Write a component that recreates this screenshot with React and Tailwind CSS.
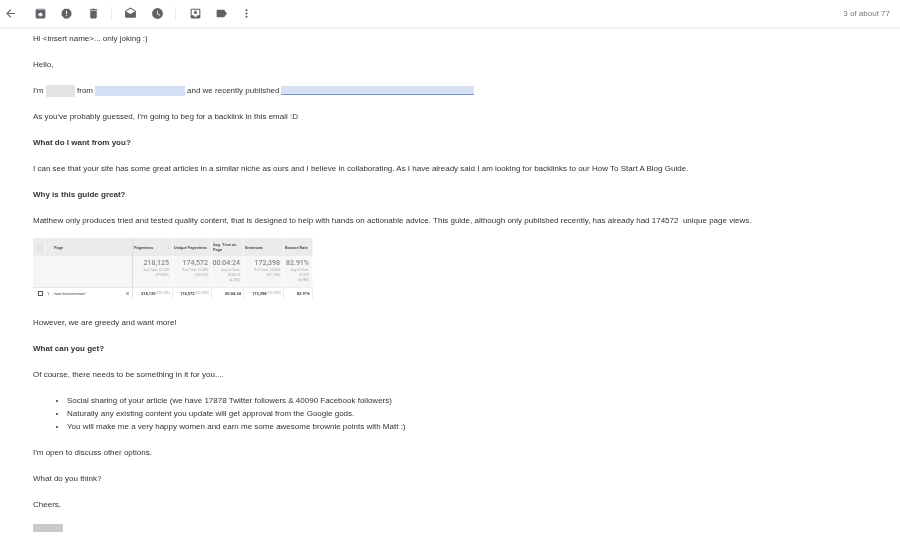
const icons = [
  { name: "back", cls: "ml-[4px] w-[13px] h-[13px]", d: "M20 11H7.83l5.59-5.59L12 4l-8 8 8 8 1.41-1.41L7.83 13H20v-2z" },
  { name: "archive", cls: "ml-[17px] w-[13px] h-[13px]", d: "M20.54 5.23l-1.39-1.68C18.88 3.21 18.47 3 18 3H6c-.47 0-.88.21-1.16.55L3.46 5.23C3.17 5.57 3 6.02 3 6.5V19c0 1.1.9 2 2 2h14c1.1 0 2-.9 2-2V6.5c0-.48-.17-.93-.46-1.27zM12 9.5L17.5 15H14v2h-4v-2H6.5L12 9.5zM5.12 5l.81-1h12l.94 1H5.12z" },
  { name: "report", cls: "ml-[13px] w-[13px] h-[13px]", d: "M15.73 3H8.27L3 8.27v7.46L8.27 21h7.46L21 15.73V8.27L15.73 3zM12 17.3c-.72 0-1.3-.58-1.3-1.3 0-.72.58-1.3 1.3-1.3.72 0 1.3.58 1.3 1.3 0 .72-.58 1.3-1.3 1.3zm1-4.3h-2V7h2v6z" },
  { name: "delete", cls: "ml-[14px] w-[13px] h-[13px]", d: "M6 19c0 1.1.9 2 2 2h8c1.1 0 2-.9 2-2V7H6v12zM19 4h-3.5l-1-1h-5l-1 1H5v2h14V4z" },
  { name: "divider1" },
  { name: "drafts", cls: "ml-[12px] w-[13px] h-[13px]", d: "M21.99 8c0-.72-.37-1.35-.94-1.7L12 1 2.95 6.3C2.38 6.65 2 7.28 2 8v10c0 1.1.9 2 2 2h16c1.1 0 2-.9 2-2l-.01-10zM12 13L3.74 7.84 12 3l8.26 4.84L12 13z" },
  { name: "schedule", cls: "ml-[14px] w-[13px] h-[13px]", d: "M12 2a10 10 0 100 20 10 10 0 000-20zm4.2 14.2L11 13V7h1.5v5.2l4.5 2.7-.8 1.3z" },
  { name: "divider2" },
  { name: "inbox", cls: "ml-[13px] w-[13px] h-[13px]", d: "M19 3H4.99c-1.11 0-1.98.89-1.98 2L3 19c0 1.1.88 2 1.99 2H19c1.1 0 2-.9 2-2V5c0-1.11-.9-2-2-2zm0 12h-4c0 1.66-1.35 3-3 3s-3-1.34-3-3H4.99V5H19v10zm-3-5h-2V7h-4v3H8l4 4 4-4z" },
  { name: "label", cls: "ml-[13px] w-[13px] h-[13px]", d: "M17.63 5.84C17.27 5.33 16.67 5 16 5L5 5.01C3.9 5.01 3 5.9 3 7v10c0 1.1.9 1.99 2 1.99L16 19c.67 0 1.27-.33 1.63-.84L22 12l-4.37-6.16z" },
  { name: "more", cls: "ml-[12px] w-[13px] h-[13px]", d: "M12 8c1.1 0 2-.9 2-2s-.9-2-2-2-2 .9-2 2 .9 2 2 2zm0 2c-1.1 0-2 .9-2 2s.9 2 2 2 2-.9 2-2-.9-2-2-2zm0 6c-1.1 0-2 .9-2 2s.9 2 2 2 2-.9 2-2-.9-2-2-2z" },
];

const columns = [
  { head: "Pageviews", total: "218,125", sub: ["% of Total: 22.26%", "(976,800)"], row: "218,125", pct: "(100.00%)", sorted: true },
  { head: "Unique Pageviews", total: "174,572", sub: ["% of Total: 22.58%", "(768,133)"], row: "174,572", pct: "(100.00%)" },
  { head: "Avg. Time on Page", total: "00:04:24", sub: ["Avg for View:", "00:04:13", "(4.53%)"], row: "00:04:24", pct: "" },
  { head: "Entrances", total: "172,398", sub: ["% of Total: 25.68%", "(671,298)"], row: "172,398", pct: "(100.00%)" },
  { head: "Bounce Rate", total: "82.91%", sub: ["Avg for View:", "76.35%", "(8.38%)"], row: "82.91%", pct: "" },
];

const Icon = ({ icon }) => {
  if (!icon.d) {
    return <div className="ml-[11px] w-px h-[13px] bg-[#eeeeee]"></div>;
  }
  return (
    <svg viewBox="0 0 24 24" className={`${icon.cls} shrink-0 fill-[#5f6368]`}>
      <path d={icon.d} />
    </svg>
  );
};

const AnalyticsTable = () => (
  <div className="mt-[-2px] mb-[17px] w-[280px] grid grid-cols-[13px_87px_40px_39px_32px_40px_29px] grid-rows-[18px_31px_12px] text-[#777] font-['Roboto',sans-serif]">
    <div className="bg-[#ebebeb] border-r border-[#f5f5f5] flex items-center justify-center">
      <div className="w-[5px] h-[5px] border-[0.5px] border-[#ddd]"></div>
    </div>
    <div className="bg-[#ebebeb] border-r border-[#ddd] flex items-center pl-[8px] text-[4px] font-bold text-[#555]">Page</div>
    {columns.map((c) => (
      <div key={c.head} className="bg-[#ebebeb] border-r border-[#f5f5f5] flex items-center justify-between pl-[1px] pr-[3px] text-[4px] leading-[5px] font-bold text-[#555]">
        <span>{c.head}</span>
        {c.sorted && <span className="font-normal text-[#777]">↓</span>}
      </div>
    ))}
    <div className="col-span-2 bg-[#f6f6f6] border-r border-[#ddd]"></div>
    {columns.map((c) => (
      <div key={c.total} className="bg-[#f6f6f6] border-r border-[#fbfbfb] text-right pr-[3px] pt-[3px]">
        <div className="text-[7px] leading-[9px] font-medium text-[#888]">{c.total}</div>
        {c.sub.map((s) => (
          <div key={s} className="text-[3.2px] leading-[5px] text-[#aaa]">{s}</div>
        ))}
      </div>
    ))}
    <div className="flex items-center justify-center border-t border-[#e5e5e5]">
      <div className="ml-[2px] w-[5px] h-[5px] border-[0.5px] border-[#555]"></div>
    </div>
    <div className="flex items-center justify-between pl-[1px] pr-[3px] border-t border-r border-[#e5e5e5] text-[4px] text-[#444]">
      <span>1.&nbsp;&nbsp;&nbsp;/seo/ecommerce/</span>
      <span className="w-[3px] h-[3px] bg-[#bbb]"></span>
    </div>
    {columns.map((c) => (
      <div key={c.row} className="flex items-center justify-end pr-[2px] border-t border-r border-[#eee] text-[4px] whitespace-nowrap overflow-hidden">
        <span className="font-bold text-[#444]">{c.row}</span>
        {c.pct && <span className="text-[3.2px] text-[#aaa]">{c.pct}</span>}
      </div>
    ))}
  </div>
);

const App = () => {
  return (
    <div className="w-[900px] h-[557px] overflow-hidden bg-white font-['Liberation_Sans',Arial,sans-serif]">
      <header className="h-[29px] border-b-2 border-[#efefef] flex items-center justify-between pr-[10px]">
        <div className="flex items-center blur-[0.3px]">
          {icons.map((icon) => (
            <Icon key={icon.name} icon={icon} />
          ))}
        </div>
        <span className="text-[8px] text-[#777] blur-[0.3px]">3 of about 77</span>
      </header>

      <main className="pl-[33px] pt-[3px] text-[8px] leading-[13px] text-[#333] [&>p]:mb-[13px] blur-[0.3px]">
        <p>Hi &lt;insert name&gt;... only joking :)</p>
        <p>Hello,</p>
        <p className="flex items-center h-[13px]">
          <span className="w-[13px]">I'm</span>
          <span className="w-[29px] h-[12px] bg-[#e4e4e4]"></span>
          <span className="ml-[2px] w-[18px]">from</span>
          <span className="w-[90px] h-[10px] bg-[#d5dff3]"></span>
          <span className="ml-[2px] w-[94px]">and we recently published</span>
          <span className="w-[193px] h-[9px] bg-[#d8e1f4] border-b border-[#6f94d8]"></span>
        </p>
        <p>As you've probably guessed, I'm going to beg for a backlink in this email :D</p>
        <p className="font-bold">What do I want from you?</p>
        <p>I can see that your site has some great articles in a similar niche as ours and I believe in collaborating. As I have already said I am looking for backlinks to our How To Start A Blog Guide.</p>
        <p className="font-bold">Why is this guide great?</p>
        <p>Matthew only produces tried and tested quality content, that is designed to help with hands on actionable advice. This guide, although only published recently, has already had 174572&nbsp; unique page views.</p>
        <AnalyticsTable />
        <p>However, we are greedy and want more!</p>
        <p className="font-bold">What can you get?</p>
        <p>Of course, there needs to be something in it for you....</p>
        <ul className="list-disc pl-[34px] mb-[13px]">
          <li>Social sharing of your article (we have 17878 Twitter followers &amp; 40090 Facebook followers)</li>
          <li>Naturally any existing content you update will get approval from the Google gods.</li>
          <li>You will make me a very happy women and earn me some awesome brownie points with Matt :)</li>
        </ul>
        <p>I'm open to discuss other options.</p>
        <p>What do you think?</p>
        <p>Cheers,</p>
        <div className="w-[30px] h-[8px] bg-[#c9c9c9]"></div>
      </main>
    </div>
  );
};

export default App;
